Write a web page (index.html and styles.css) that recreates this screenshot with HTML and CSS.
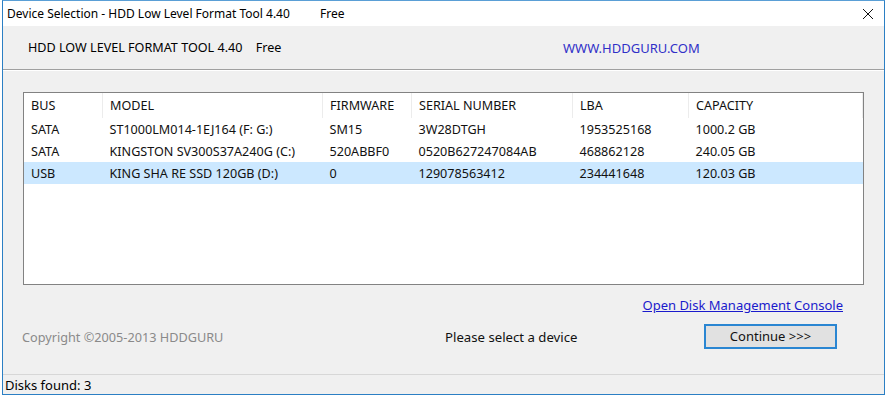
FILE: index.html
```html
<!DOCTYPE html>
<html lang="en">
<head>
    <meta charset="UTF-8">
    <title>Device Selection - HDD Low Level Format Tool 4.40</title>
    <link rel="stylesheet" href="styles.css">
</head>
<body>
    <div class="window">
        <!-- Title bar -->
        <div class="titlebar">
            <span class="title">Device Selection - HDD Low Level Format Tool 4.40 <span class="gap"></span>Free</span>
            <svg class="close" width="12" height="12" viewBox="0 0 12 12">
                <path d="M1 1 L11 11 M11 1 L1 11" stroke="#111" stroke-width="1" fill="none"/>
            </svg>
        </div>

        <!-- Product banner -->
        <div class="banner">
            <span class="product">HDD LOW LEVEL FORMAT TOOL 4.40 <span class="gap-sm"></span>Free</span>
            <span class="site">WWW.HDDGURU.COM</span>
        </div>

        <div class="content">
            <div class="list">
                <table>
                    <thead>
                        <tr>
                            <th class="c-bus">BUS</th>
                            <th class="c-model">MODEL</th>
                            <th class="c-fw">FIRMWARE</th>
                            <th class="c-sn">SERIAL NUMBER</th>
                            <th class="c-lba">LBA</th>
                            <th class="c-cap">CAPACITY</th>
                        </tr>
                    </thead>
                    <tbody>
                        <tr>
                            <td>SATA</td>
                            <td>ST1000LM014-1EJ164 (F: G:)</td>
                            <td>SM15</td>
                            <td>3W28DTGH</td>
                            <td>1953525168</td>
                            <td>1000.2 GB</td>
                        </tr>
                        <tr>
                            <td>SATA</td>
                            <td>KINGSTON SV300S37A240G (C:)</td>
                            <td>520ABBF0</td>
                            <td>0520B627247084AB</td>
                            <td>468862128</td>
                            <td>240.05 GB</td>
                        </tr>
                        <tr class="selected">
                            <td>USB</td>
                            <td>KING SHA RE SSD 120GB (D:)</td>
                            <td>0</td>
                            <td>129078563412</td>
                            <td>234441648</td>
                            <td>120.03 GB</td>
                        </tr>
                    </tbody>
                </table>
            </div>

            <div class="link-row">
                <a href="#" class="console-link">Open Disk Management Console</a>
            </div>

            <div class="action-row">
                <span class="copyright">Copyright ©2005-2013 HDDGURU</span>
                <span class="message">Please select a device</span>
                <button type="button" class="continue-btn">Continue &gt;&gt;&gt;</button>
            </div>
        </div>

        <!-- Status bar -->
        <div class="statusbar">Disks found: 3</div>
    </div>
</body>
</html>
```

FILE: styles.css
```css
body {
    margin: 0;
    background-color: #ffffff;
    font-family: "Noto Sans", "Open Sans", sans-serif;
    font-size: 12px;
    color: #111;
}
.window {
    margin-left: 2px;
    width: 881px;
    height: 393px;
    border: 1px solid #2b7fc4;
    border-top-color: #5a9fd6;
    background-color: #f0f0f0;
    display: flex;
    flex-direction: column;
}
.titlebar {
    height: 25px;
    background-color: #ffffff;
    display: flex;
    align-items: center;
    justify-content: space-between;
    padding: 0 10px 0 4px;
}
.title {
    font-size: 12px;
    color: #000;
}
.gap {
    display: inline-block;
    width: 27px;
}
.gap-sm {
    display: inline-block;
    width: 10px;
}
.close {
    margin-top: 1px;
}
.banner {
    height: 43px;
    display: flex;
    align-items: center;
    padding-left: 25px;
    border-bottom: 1px solid #a0a0a0;
    box-shadow: 0 1px 0 #ffffff;
}
.product {
    width: 535px;
    font-size: 12.6px;
    color: #000;
}
.site {
    font-size: 13px;
    color: #3030c8;
}
.content {
    flex: 1;
    padding: 22px 20px 0 20px;
}
.list {
    height: 191px;
    border: 1px solid #828282;
    background-color: #ffffff;
}
table {
    width: 100%;
    border-collapse: collapse;
    table-layout: fixed;
    font-size: 12.6px;
}
th, td {
    text-align: left;
    font-weight: normal;
    padding: 0 0 0 7px;
    white-space: nowrap;
    height: 22px;
}
th {
    height: 25px;
    border-right: 1px solid #ececec;
}
.c-bus { width: 71px; }
.c-model { width: 212px; }
.c-fw { width: 81px; }
.c-sn { width: 153px; }
.c-lba { width: 108px; }
.selected td {
    background-color: #cce8ff;
}
.link-row {
    display: flex;
    justify-content: flex-end;
    padding: 11px 21px 0 0;
    height: 20px;
}
.console-link {
    color: #1a1acc;
    font-size: 13px;
}
.action-row {
    display: flex;
    align-items: center;
    height: 26px;
    margin-top: 6px;
}
.copyright {
    color: #8a8a8a;
    width: 423px;
    font-size: 12.7px;
    margin-top: 4px;
    margin-left: -1px;
}
.message {
    width: 259px;
    font-size: 13.2px;
    margin-top: 4px;
}
button.continue-btn {
    width: 133px;
    height: 25px;
    margin-top: 2px;
    background-color: #e1e1e1;
    border: 2px solid #2a86d2;
    font-family: inherit;
    font-size: 13px;
    color: #111;
    padding: 0;
}
.statusbar {
    height: 19px;
    border-top: 1px solid #d7d7d7;
    padding-left: 2px;
    font-size: 13px;
    color: #000;
    display: flex;
    align-items: center;
}
```
